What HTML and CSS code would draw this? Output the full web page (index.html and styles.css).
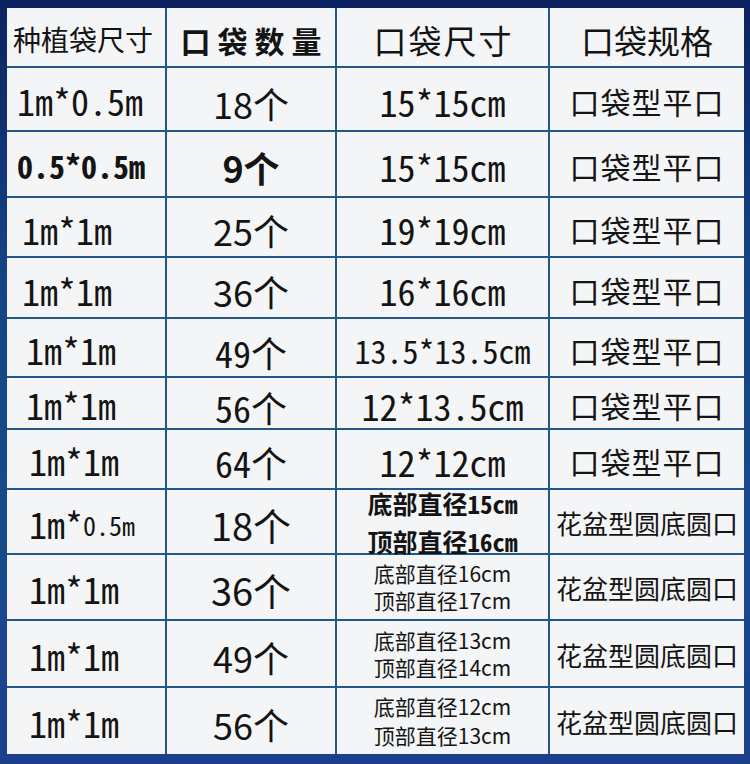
FILE: index.html
```html
<!DOCTYPE html>
<html lang="zh-CN">
<head>
<meta charset="utf-8">
<title>种植袋尺寸</title>
<link rel="stylesheet" href="styles.css">
</head>
<body>
<div class="sheet">
  <div class="cell c1 head h1">种植袋尺寸</div>
  <div class="cell c2 head h2">口袋数量</div>
  <div class="cell c3 head h3">口袋尺寸</div>
  <div class="cell c4 head h4">口袋规格</div>

  <div class="cell c1 mono p1">1m*0.5m</div>
  <div class="cell c2 cnt low">18个</div>
  <div class="cell c3 mono">15*15cm</div>
  <div class="cell c4 spec">口袋型平口</div>

  <div class="cell c1 mono bold small p1">0.5*0.5m</div>
  <div class="cell c2 cnt bold">9个</div>
  <div class="cell c3 mono">15*15cm</div>
  <div class="cell c4 spec">口袋型平口</div>

  <div class="cell c1 mono p2">1m*1m</div>
  <div class="cell c2 cnt">25个</div>
  <div class="cell c3 mono">19*19cm</div>
  <div class="cell c4 spec">口袋型平口</div>

  <div class="cell c1 mono p2">1m*1m</div>
  <div class="cell c2 cnt">36个</div>
  <div class="cell c3 mono">16*16cm</div>
  <div class="cell c4 spec">口袋型平口</div>

  <div class="cell c1 mono p3">1m*1m</div>
  <div class="cell c2 cnt mono low">49个</div>
  <div class="cell c3 mono small">13.5*13.5cm</div>
  <div class="cell c4 spec">口袋型平口</div>

  <div class="cell c1 mono p3">1m*1m</div>
  <div class="cell c2 cnt mono low">56个</div>
  <div class="cell c3 mono">12*13.5cm</div>
  <div class="cell c4 spec">口袋型平口</div>

  <div class="cell c1 mono p4">1m*1m</div>
  <div class="cell c2 cnt mono">64个</div>
  <div class="cell c3 mono">12*12cm</div>
  <div class="cell c4 spec">口袋型平口</div>

  <div class="cell c1 mono p4">1m*<span class="tiny">0.5m</span></div>
  <div class="cell c2 cnt big">18个</div>
  <div class="cell c3 dia dia-bold"><span>底部直径15cm</span><span>顶部直径16cm</span></div>
  <div class="cell c4 pot">花盆型圆底圆口</div>

  <div class="cell c1 mono p4">1m*1m</div>
  <div class="cell c2 cnt big">36个</div>
  <div class="cell c3 dia"><span>底部直径16cm</span><span>顶部直径17cm</span></div>
  <div class="cell c4 pot">花盆型圆底圆口</div>

  <div class="cell c1 mono p4">1m*1m</div>
  <div class="cell c2 cnt">49个</div>
  <div class="cell c3 dia"><span>底部直径13cm</span><span>顶部直径14cm</span></div>
  <div class="cell c4 pot">花盆型圆底圆口</div>

  <div class="cell c1 mono p4">1m*1m</div>
  <div class="cell c2 cnt">56个</div>
  <div class="cell c3 dia dia-wide"><span>底部直径12cm</span><span>顶部直径13cm</span></div>
  <div class="cell c4 pot">花盆型圆底圆口</div>
</div>
</body>
</html>
```

FILE: styles.css
```css
html, body {
  margin: 0;
  padding: 0;
}
body {
  width: 750px;
  height: 764px;
  overflow: hidden;
  background: linear-gradient(180deg, #0c2260 0%, #154383 35%, #1a4a8c 70%, #1b3f8c 100%);
  font-family: "Noto Sans CJK SC", "Noto Sans", sans-serif;
  color: #141414;
}
.sheet {
  margin: 8px 0 0 7px;
  width: 737px;
  display: grid;
  grid-template-columns: 158px 168px 211px 194px;
  grid-template-rows: 58px 62px 64px 58px 59px 57px 50px 58px 63px 64px 65px 66px;
  gap: 2px;
  background: #215789;
}
.cell {
  background: #f4f5f6;
  display: flex;
  align-items: center;
  justify-content: center;
  white-space: nowrap;
  line-height: 1;
}
.c1 {
  justify-content: flex-start;
}
.head.h1 {
  font-size: 28px;
  padding: 4px 0 0 6px;
}
.head.h2 {
  font-size: 30px;
  font-weight: 700;
  letter-spacing: 7px;
  padding: 6px 0 0 7px;
}
.head.h3 {
  font-size: 33px;
  letter-spacing: 2px;
  padding: 6px 0 0 2px;
}
.head.h4 {
  font-size: 33px;
  padding: 6px 0 0 0;
}
.mono {
  font-family: "Noto Sans Mono CJK SC", "Noto Sans CJK SC", "DejaVu Sans Mono", monospace;
  font-size: 36px;
}
.mono.small {
  font-size: 32px;
}
.bold {
  font-weight: 700;
}
.p1 { padding-left: 10px; padding-top: 2px; }
.p2 { padding-left: 15px; padding-top: 4px; }
.p3 { padding-left: 19px; padding-top: 2px; }
.p4 { padding-left: 22px; padding-top: 2px; }
.tiny {
  font-size: 26px;
  padding-top: 4px;
}
.cnt {
  font-size: 36px;
  padding-top: 6px;
}
.cnt.low {
  padding-top: 8px;
}
.cnt.big {
  font-size: 38px;
}
.c3.mono {
  padding-top: 4px;
}
.spec {
  font-size: 30px;
  letter-spacing: 1px;
  padding-top: 4px;
}
.pot {
  font-size: 26px;
  padding-top: 2px;
}
.dia {
  flex-direction: column;
  font-size: 21px;
  line-height: 27px;
}
.dia-bold {
  font-family: "Noto Sans Mono CJK SC", "Noto Sans CJK SC", monospace;
  font-weight: 700;
  font-size: 25px;
  line-height: 38px;
}
.dia-wide {
  line-height: 29px;
}
```
